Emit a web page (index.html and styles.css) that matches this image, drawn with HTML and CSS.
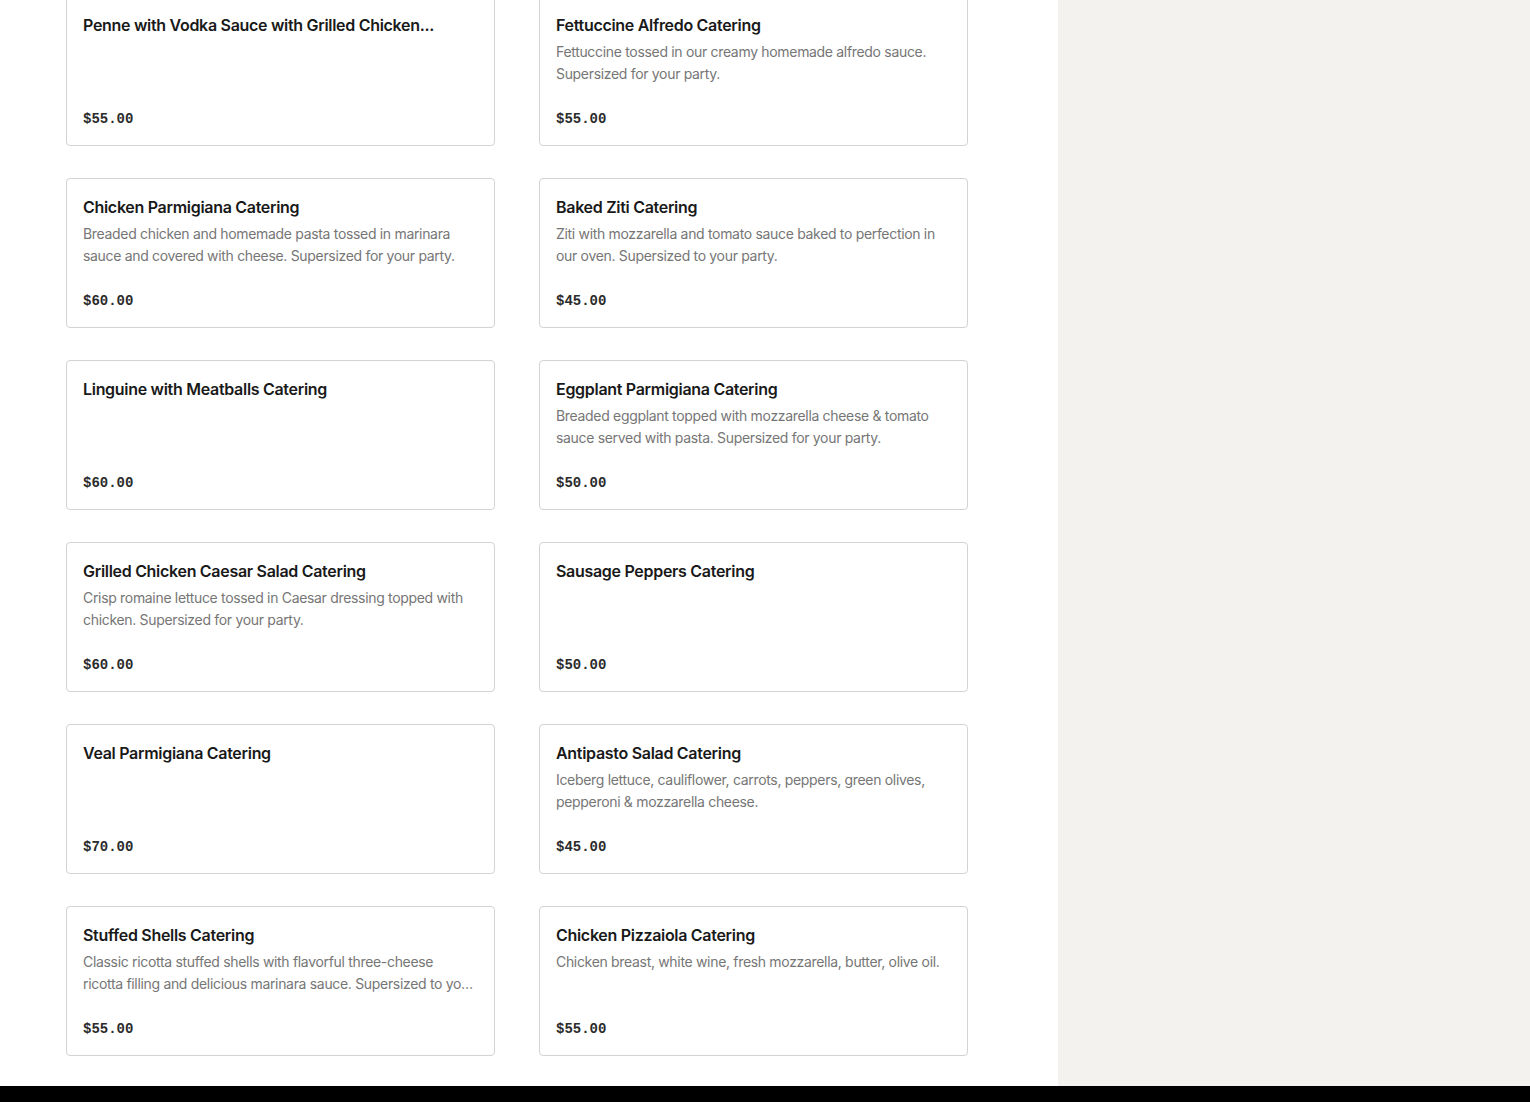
FILE: index.html
```html
<!DOCTYPE html>
<html lang="en">
<head>
    <meta charset="UTF-8">
    <meta name="viewport" content="width=device-width, initial-scale=1.0">
    <title>Catering Menu</title>
    <link rel="stylesheet" href="styles.css">
</head>
<body>
    <div class="page">
        <main class="menu">
            <div class="menu-grid">
                <div class="item">
                    <div class="item-name">Penne with Vodka Sauce with Grilled Chicken...</div>
                    <div class="item-price">$55.00</div>
                </div>
                <div class="item">
                    <div class="item-name">Fettuccine Alfredo Catering</div>
                    <div class="item-desc">Fettuccine tossed in our creamy homemade alfredo sauce. Supersized for your party.</div>
                    <div class="item-price">$55.00</div>
                </div>
                <div class="item">
                    <div class="item-name">Chicken Parmigiana Catering</div>
                    <div class="item-desc">Breaded chicken and homemade pasta tossed in marinara sauce and covered with cheese. Supersized for your party.</div>
                    <div class="item-price">$60.00</div>
                </div>
                <div class="item">
                    <div class="item-name">Baked Ziti Catering</div>
                    <div class="item-desc">Ziti with mozzarella and tomato sauce baked to perfection in our oven. Supersized to your party.</div>
                    <div class="item-price">$45.00</div>
                </div>
                <div class="item">
                    <div class="item-name">Linguine with Meatballs Catering</div>
                    <div class="item-price">$60.00</div>
                </div>
                <div class="item">
                    <div class="item-name">Eggplant Parmigiana Catering</div>
                    <div class="item-desc">Breaded eggplant topped with mozzarella cheese &amp; tomato sauce served with pasta. Supersized for your party.</div>
                    <div class="item-price">$50.00</div>
                </div>
                <div class="item">
                    <div class="item-name">Grilled Chicken Caesar Salad Catering</div>
                    <div class="item-desc">Crisp romaine lettuce tossed in Caesar dressing topped with chicken. Supersized for your party.</div>
                    <div class="item-price">$60.00</div>
                </div>
                <div class="item">
                    <div class="item-name">Sausage Peppers Catering</div>
                    <div class="item-price">$50.00</div>
                </div>
                <div class="item">
                    <div class="item-name">Veal Parmigiana Catering</div>
                    <div class="item-price">$70.00</div>
                </div>
                <div class="item">
                    <div class="item-name">Antipasto Salad Catering</div>
                    <div class="item-desc">Iceberg lettuce, cauliflower, carrots, peppers, green olives, pepperoni &amp; mozzarella cheese.</div>
                    <div class="item-price">$45.00</div>
                </div>
                <div class="item">
                    <div class="item-name">Stuffed Shells Catering</div>
                    <div class="item-desc">Classic ricotta stuffed shells with flavorful three-cheese ricotta filling and delicious marinara sauce. Supersized to your party.</div>
                    <div class="item-price">$55.00</div>
                </div>
                <div class="item">
                    <div class="item-name">Chicken Pizzaiola Catering</div>
                    <div class="item-desc">Chicken breast, white wine, fresh mozzarella, butter, olive oil.</div>
                    <div class="item-price">$55.00</div>
                </div>
            </div>
        </main>
        <aside class="side"></aside>
    </div>
    <footer class="footer"></footer>
</body>
</html>
```

FILE: styles.css
```css
body {
    margin: 0;
    font-family: 'Inter', 'Liberation Sans', sans-serif;
    color: #191919;
    background: #ffffff;
}
.page {
    display: flex;
}
.menu {
    width: 1058px;
    background: #ffffff;
}
.menu-grid {
    display: grid;
    grid-template-columns: 429px 429px;
    column-gap: 44px;
    row-gap: 32px;
    margin-top: -4px;
    padding: 0 0 30px 66px;
}
.side {
    flex: 1;
    background: #f3f2ef;
}
.item {
    display: flex;
    flex-direction: column;
    box-sizing: border-box;
    height: 150px;
    padding: 16px;
    border: 1px solid #d3d3d3;
    border-radius: 4px;
    background: #ffffff;
}
.item-name {
    font-size: 16px;
    font-weight: 600;
    line-height: 24px;
    letter-spacing: -0.3px;
    white-space: nowrap;
    overflow: hidden;
    text-overflow: ellipsis;
}
.item-desc {
    margin-top: 4px;
    padding-right: 4px;
    font-size: 14px;
    line-height: 22px;
    letter-spacing: -0.32px;
    color: #767676;
    display: -webkit-box;
    -webkit-line-clamp: 2;
    -webkit-box-orient: vertical;
    overflow: hidden;
}
.item-price {
    margin-top: auto;
    font-family: 'Liberation Mono', monospace;
    font-size: 14px;
    font-weight: bold;
    line-height: 20px;
    color: #2b2b2b;
}
.footer {
    height: 240px;
    background: #000000;
}
```
